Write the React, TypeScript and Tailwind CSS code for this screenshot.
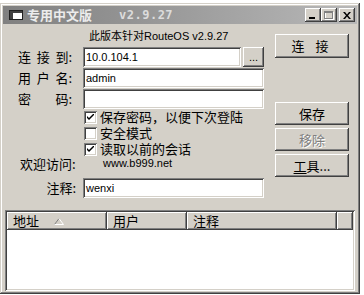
import React from "react";

const raised =
    "shadow-[inset_-1px_-1px_#404040,inset_1px_1px_#ffffff,inset_-2px_-2px_#808080,inset_2px_2px_#d4d0c8]";
const sunken =
    "shadow-[inset_1px_1px_#808080,inset_-1px_-1px_#ffffff,inset_2px_2px_#404040,inset_-2px_-2px_#d4d0c8]";

function SpacedLabel({ chars }: { chars: string[] }) {
    return (
        <div className="flex w-[54px] justify-between text-[13px] leading-[20px] text-black">
            {chars.map((c, i) => (
                <span key={i}>{c}</span>
            ))}
        </div>
    );
}

function TextBox({ value, className = "" }: { value?: string; className?: string }) {
    return (
        <div
            className={`h-[20px] bg-white ${sunken} flex items-center pl-[3px] font-['Liberation_Sans','Noto_Sans_CJK_SC',sans-serif] text-[11px] text-black ${className}`}
        >
            {value}
        </div>
    );
}

function Check({ checked, label }: { checked: boolean; label: string }) {
    return (
        <div className="flex h-[16px] items-center">
            <div className={`ml-[66px] flex h-[13px] w-[13px] items-center justify-center bg-white ${sunken}`}>
                {checked && (
                    <svg width="7" height="7" viewBox="0 0 7 7">
                        <path d="M0 2 L0 4 L2 6 L7 1 L7 -1 L2 4 Z" fill="#000" />
                    </svg>
                )}
            </div>
            <span className="ml-[3px] text-[13px] leading-[16px] text-black">{label}</span>
        </div>
    );
}

function WinButton({
    children,
    className = "",
    disabled = false,
}: {
    children: React.ReactNode;
    className?: string;
    disabled?: boolean;
}) {
    return (
        <div
            className={`flex w-[74px] items-center justify-center bg-[#d4d0c8] ${raised} text-[13px] ${
                disabled ? "text-[#808080] [text-shadow:1px_1px_0_#ffffff]" : "text-black"
            } ${className}`}
        >
            {children}
        </div>
    );
}

export default function App() {
    return (
        <div className="h-[295px] w-[364px] overflow-hidden bg-white pt-[3px] font-['Noto_Sans_CJK_SC',sans-serif]">
            <div className="flex h-[291px] w-[360px] flex-col bg-[#d4d0c8] p-[3px] shadow-[inset_-1px_-1px_#404040,inset_1px_1px_#d4d0c8,inset_-2px_-2px_#808080,inset_2px_2px_#ffffff]">
                {/* title bar */}
                <div className="flex h-[18px] items-center bg-linear-to-r from-[#808080] to-[#b8b8b8] pl-[6px] pr-[2px]">
                    <svg width="14" height="10" viewBox="0 0 14 10">
                        <rect x="0.5" y="0.5" width="13" height="9" fill="#fff" stroke="#202020" />
                        <rect x="1" y="1" width="3" height="8" fill="#404040" />
                        <rect x="1" y="1" width="12" height="2" fill="#404040" />
                    </svg>
                    <span className="ml-[4px] text-[13px] font-bold leading-[18px] text-[#ececec]">专用中文版</span>
                    <span className="ml-[27px] font-['DejaVu_Sans_Mono',monospace] text-[12px] font-bold tracking-[0.5px] text-[#dcdcdc]">
                        v2.9.27
                    </span>
                    <div className="ml-auto flex items-center">
                        <div className={`flex h-[14px] w-[16px] items-end bg-[#d4d0c8] pb-[3px] pl-[4px] ${raised}`}>
                            <div className="h-[2px] w-[6px] bg-black" />
                        </div>
                        <div className={`flex h-[14px] w-[16px] items-center justify-center bg-[#d4d0c8] ${raised}`}>
                            <svg width="10" height="9" viewBox="0 0 10 9">
                                <rect x="1.5" y="1.5" width="8" height="7" fill="none" stroke="#ffffff" />
                                <rect x="0.5" y="0.5" width="8" height="7" fill="none" stroke="#808080" />
                                <rect x="1" y="1" width="7" height="1" fill="#808080" />
                            </svg>
                        </div>
                        <div className={`ml-[2px] flex h-[14px] w-[16px] items-center justify-center bg-[#d4d0c8] ${raised}`}>
                            <svg width="8" height="7" viewBox="0 0 8 7">
                                <path d="M0 0 L2 0 L4 2.5 L6 0 L8 0 L5 3.5 L8 7 L6 7 L4 4.5 L2 7 L0 7 L3 3.5 Z" fill="#000" />
                            </svg>
                        </div>
                    </div>
                </div>

                {/* main area */}
                <div className="flex">
                    <div className="flex w-[263px] flex-col">
                        <div className="h-[23px] pl-[86px] pt-[6px] font-['Liberation_Sans','Noto_Sans_CJK_SC',sans-serif] text-[11px] leading-[13px] text-black">
                            此版本针对RouteOS v2.9.27
                        </div>
                        <div className="flex h-[20px] items-center pl-[15px]">
                            <SpacedLabel chars={["连", "接", "到:"]} />
                            <TextBox value="10.0.104.1" className="ml-[11px] w-[158px]" />
                            <div className={`ml-[2px] flex h-[20px] w-[21px] items-center justify-center bg-[#d4d0c8] ${raised} font-['Liberation_Sans',sans-serif] text-[11px] leading-none text-black`}>
                                ...
                            </div>
                        </div>
                        <div className="mt-[1px] flex h-[20px] items-center pl-[15px]">
                            <SpacedLabel chars={["用", "户", "名:"]} />
                            <TextBox value="admin" className="ml-[11px] w-[181px]" />
                        </div>
                        <div className="mt-[1px] flex h-[20px] items-center pl-[15px]">
                            <SpacedLabel chars={["密", "码:"]} />
                            <TextBox className="ml-[11px] w-[181px]" />
                        </div>
                        <div className="flex flex-col pl-[15px]">
                            <Check checked label="保存密码，以便下次登陆" />
                            <Check checked={false} label="安全模式" />
                            <Check checked label="读取以前的会话" />
                        </div>
                        <div className="flex h-[16px] items-start pl-[17px]">
                            <span className="w-[80px] text-[13px] leading-[13px] text-black">欢迎访问:</span>
                            <span className="ml-[3px] font-['Liberation_Sans',sans-serif] text-[11px] leading-[13px] text-black">
                                www.b999.net
                            </span>
                        </div>
                        <div className="mt-[5px] flex h-[20px] items-center pl-[15px]">
                            <span className="w-[58px] text-right text-[13px] text-black">注释:</span>
                            <TextBox value="wenxi" className="ml-[7px] w-[181px]" />
                        </div>
                    </div>

                    <div className="ml-[9px] flex flex-col">
                        <WinButton className="mt-[10px] h-[24px] tracking-[4px]">连 接</WinButton>
                        <WinButton className="mt-[44px] h-[23px]">保存</WinButton>
                        <WinButton className="mt-[3px] h-[23px]" disabled>
                            移除
                        </WinButton>
                        <WinButton className="mt-[3px] h-[23px]">
                            <span className="underline underline-offset-2">工</span>
                            <span>具...</span>
                        </WinButton>
                    </div>
                </div>

                {/* list view */}
                <div className={`mx-[2px] mt-[12px] flex flex-1 flex-col bg-white p-[2px] ${sunken}`}>
                    <div className="flex h-[18px] text-[13px] leading-[18px] text-black">
                        <div className={`flex w-[100px] items-center bg-[#d4d0c8] pl-[6px] ${raised}`}>
                            <span>地址</span>
                            <svg className="ml-[15px]" width="10" height="7" viewBox="0 0 10 7">
                                <path d="M0.5 6.5 L5 0.5" stroke="#808080" fill="none" />
                                <path d="M5 0.5 L9.5 6.5 L0.5 6.5" stroke="#ffffff" fill="none" />
                            </svg>
                        </div>
                        <div className={`flex w-[80px] items-center bg-[#d4d0c8] pl-[6px] ${raised}`}>用户</div>
                        <div className={`flex w-[150px] items-center bg-[#d4d0c8] pl-[6px] ${raised}`}>注释</div>
                        <div className={`flex-1 bg-[#d4d0c8] ${raised}`} />
                    </div>
                </div>
            </div>
        </div>
    );
}
